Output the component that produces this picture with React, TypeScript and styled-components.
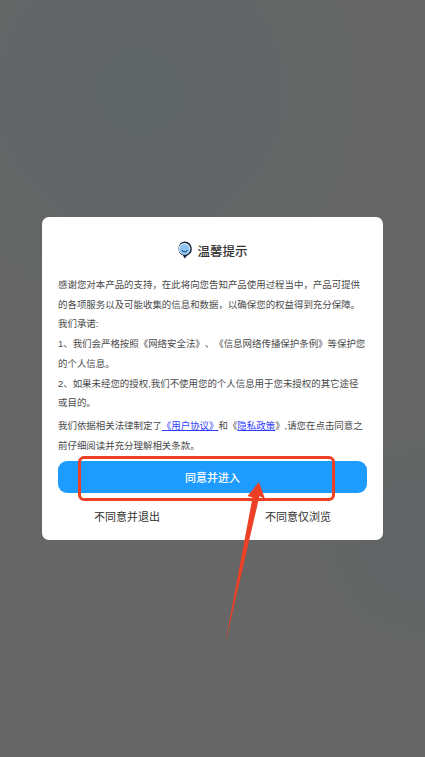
import styled, { createGlobalStyle } from "styled-components";

const GlobalStyle = createGlobalStyle`
  html, body {
    margin: 0;
    padding: 0;
    height: 100%;
  }
  body {
    font-family: "Liberation Sans", "Noto Sans CJK SC", sans-serif;
    text-spacing-trim: space-all;
  }
`;

const App = () => {
  return (
    <Screen>
      <GlobalStyle />
      <Dialog>
        <Header>
          <BubbleIcon />
          <Title>温馨提示</Title>
        </Header>
        <Body>
          <Para>
            感谢您对本产品的支持，在此将向您告知产品使用过程当中，产品可提供的各项服务以及可能收集的信息和数据，以确保您的权益得到充分保障。
          </Para>
          <Para>我们承诺:</Para>
          <Para>
            1、我们会严格按照《网络安全法》、《信息网络传播保护条例》等保护您的个人信息。
          </Para>
          <Para>
            2、如果未经您的授权,我们不使用您的个人信息用于您未授权的其它途径或目的。
          </Para>
          <LastPara>
            我们依据相关法律制定了<Link>《用户协议》</Link>和《<Link>隐私政策</Link>》,请您在点击同意之前仔细阅读并充分理解相关条款。
          </LastPara>
        </Body>
        <AgreeButton>同意并进入</AgreeButton>
        <Footer>
          <FooterAction>不同意并退出</FooterAction>
          <FooterAction>不同意仅浏览</FooterAction>
        </Footer>
      </Dialog>
      <Highlight />
      <Arrow />
    </Screen>
  );
};

const BubbleIcon = () => (
  <svg width="15" height="18" viewBox="0 0 15 18">
    <path
      d="M7.500 0.500a7.300 7.300 0 0 1 2.800 14L7.500 17.500l-1.400-3A7.300 7.300 0 0 1 7.500 0.500z"
      fill="#10243a"
    />
    <circle cx="7.500" cy="7.800" r="5.900" fill="#fff" />
    <circle cx="7.500" cy="8.300" r="5.200" fill="#8cc4f7" />
    <path
      d="M4.800 9.500c1 1.800 4.400 1.800 5.400 0"
      fill="none"
      stroke="#10243a"
      strokeWidth="1"
      strokeLinecap="round"
    />
  </svg>
);

const Arrow = () => (
  <ArrowSvg width="425" height="757" viewBox="0 0 425 757">
    <path
      d="M259 482L265 499L259.500 496L225 645L252.500 497.500L247.500 496z"
      fill="#ee4026"
    />
  </ArrowSvg>
);

//*STYLES
const Screen = styled.div`
  position: relative;
  width: 425px;
  height: 757px;
  overflow: hidden;
  background:
    radial-gradient(circle at 425px 540px, #5f6465 0, rgba(95, 100, 101, 0) 130px),
    radial-gradient(circle at 140px 90px, #5f6566 0, rgba(95, 101, 102, 0) 260px),
    #666666;
  display: flex;
  justify-content: center;
  padding-top: 217px;
  box-sizing: border-box;
`;

const Dialog = styled.div`
  width: 341px;
  height: 323px;
  box-sizing: border-box;
  background: #fff;
  border-radius: 7px;
  padding: 23px 16px 0;
  display: flex;
  flex-direction: column;
`;

const Header = styled.div`
  display: flex;
  align-items: center;
  justify-content: center;
  gap: 5px;
  height: 20px;
  margin-bottom: 15px;
`;

const Title = styled.div`
  font-size: 12.5px;
  font-weight: 500;
  color: #333;
`;

const Body = styled.div`
  font-size: 9.45px;
  line-height: 19.7px;
  color: #4a4a4a;
`;

const Para = styled.p`
  margin: 0;
`;

const LastPara = styled.p`
  margin: 3px 0 0;
`;

const Link = styled.span`
  color: #2f3dff;
  text-decoration: underline;
`;

const AgreeButton = styled.div`
  margin-top: 6px;
  height: 32px;
  border-radius: 9px;
  background: #1e9bff;
  color: #fff;
  font-size: 11px;
  font-weight: 500;
  display: flex;
  align-items: center;
  justify-content: center;
`;

const Footer = styled.div`
  display: flex;
  justify-content: space-between;
  padding: 0 36px;
  margin-top: 16px;
`;

const FooterAction = styled.div`
  font-size: 11px;
  line-height: 16px;
  color: #333;
`;

const Highlight = styled.div`
  position: absolute;
  left: 78px;
  top: 456px;
  width: 257px;
  height: 45px;
  box-sizing: border-box;
  border: 3px solid #ee4026;
  border-radius: 6px;
`;

const ArrowSvg = styled.svg`
  position: absolute;
  left: 0;
  top: 0;
`;

export default App;
